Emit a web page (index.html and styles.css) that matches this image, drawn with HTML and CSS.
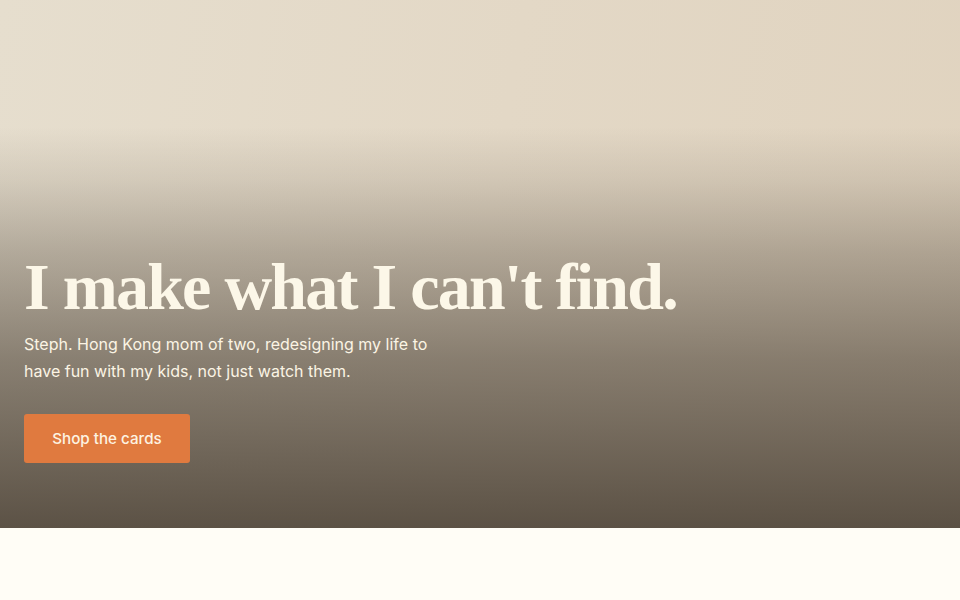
FILE: index.html
```html
<!DOCTYPE html>
<html lang="en">
<head>
<meta charset="utf-8">
<title>I make what I can't find.</title>
<link rel="stylesheet" href="styles.css">
</head>
<body>
<section class="hero">
  <div class="hero-content">
    <h1 class="hero-title">I make what I can't find.</h1>
    <p class="hero-text">Steph. Hong Kong mom of two, redesigning my life to have fun with my kids, not just watch them.</p>
    <a class="hero-button" href="#">Shop the cards</a>
  </div>
</section>
<section class="below"></section>
</body>
</html>
```
FILE: styles.css
```css
* { box-sizing: border-box; }
html, body { margin: 0; padding: 0; }
body {
  background: #fffdf6;
  font-family: "Inter", "Liberation Sans", sans-serif;
}
.hero {
  height: 528px;
  background:
    linear-gradient(180deg, rgba(80,70,58,0) 0%, rgba(80,70,58,0) 24%, rgba(80,70,58,0.12) 34%, rgba(80,70,58,0.35) 48%, rgba(80,70,58,0.62) 68%, rgba(80,70,58,0.92) 100%),
    linear-gradient(100deg, #e6dece 0%, #e3d8c6 50%, #e0d3bf 100%);
  display: flex;
  flex-direction: column;
  justify-content: flex-end;
  padding: 0 24px 65px;
}
.hero-content { display: flex; flex-direction: column; align-items: flex-start; }
.hero-title {
  margin: 0;
  font-family: "Liberation Serif", serif;
  font-weight: 700;
  font-size: 66px;
  letter-spacing: -1.75px;
  line-height: 1;
  color: #fcf7e8;
}
.hero-text {
  margin: 11px 0 0;
  max-width: 412px;
  font-size: 16px;
  line-height: 27px;
  color: #fbf4e4;
}
.hero-button {
  margin-top: 29px;
  display: inline-flex;
  align-items: center;
  justify-content: center;
  width: 166px;
  height: 49px;
  background: #e07a3f;
  color: #fdf3e2;
  border-radius: 3px;
  font-size: 15.2px;
  font-weight: 500;
  text-decoration: none;
}
.below { height: 72px; background: #fffdf6; }
```
